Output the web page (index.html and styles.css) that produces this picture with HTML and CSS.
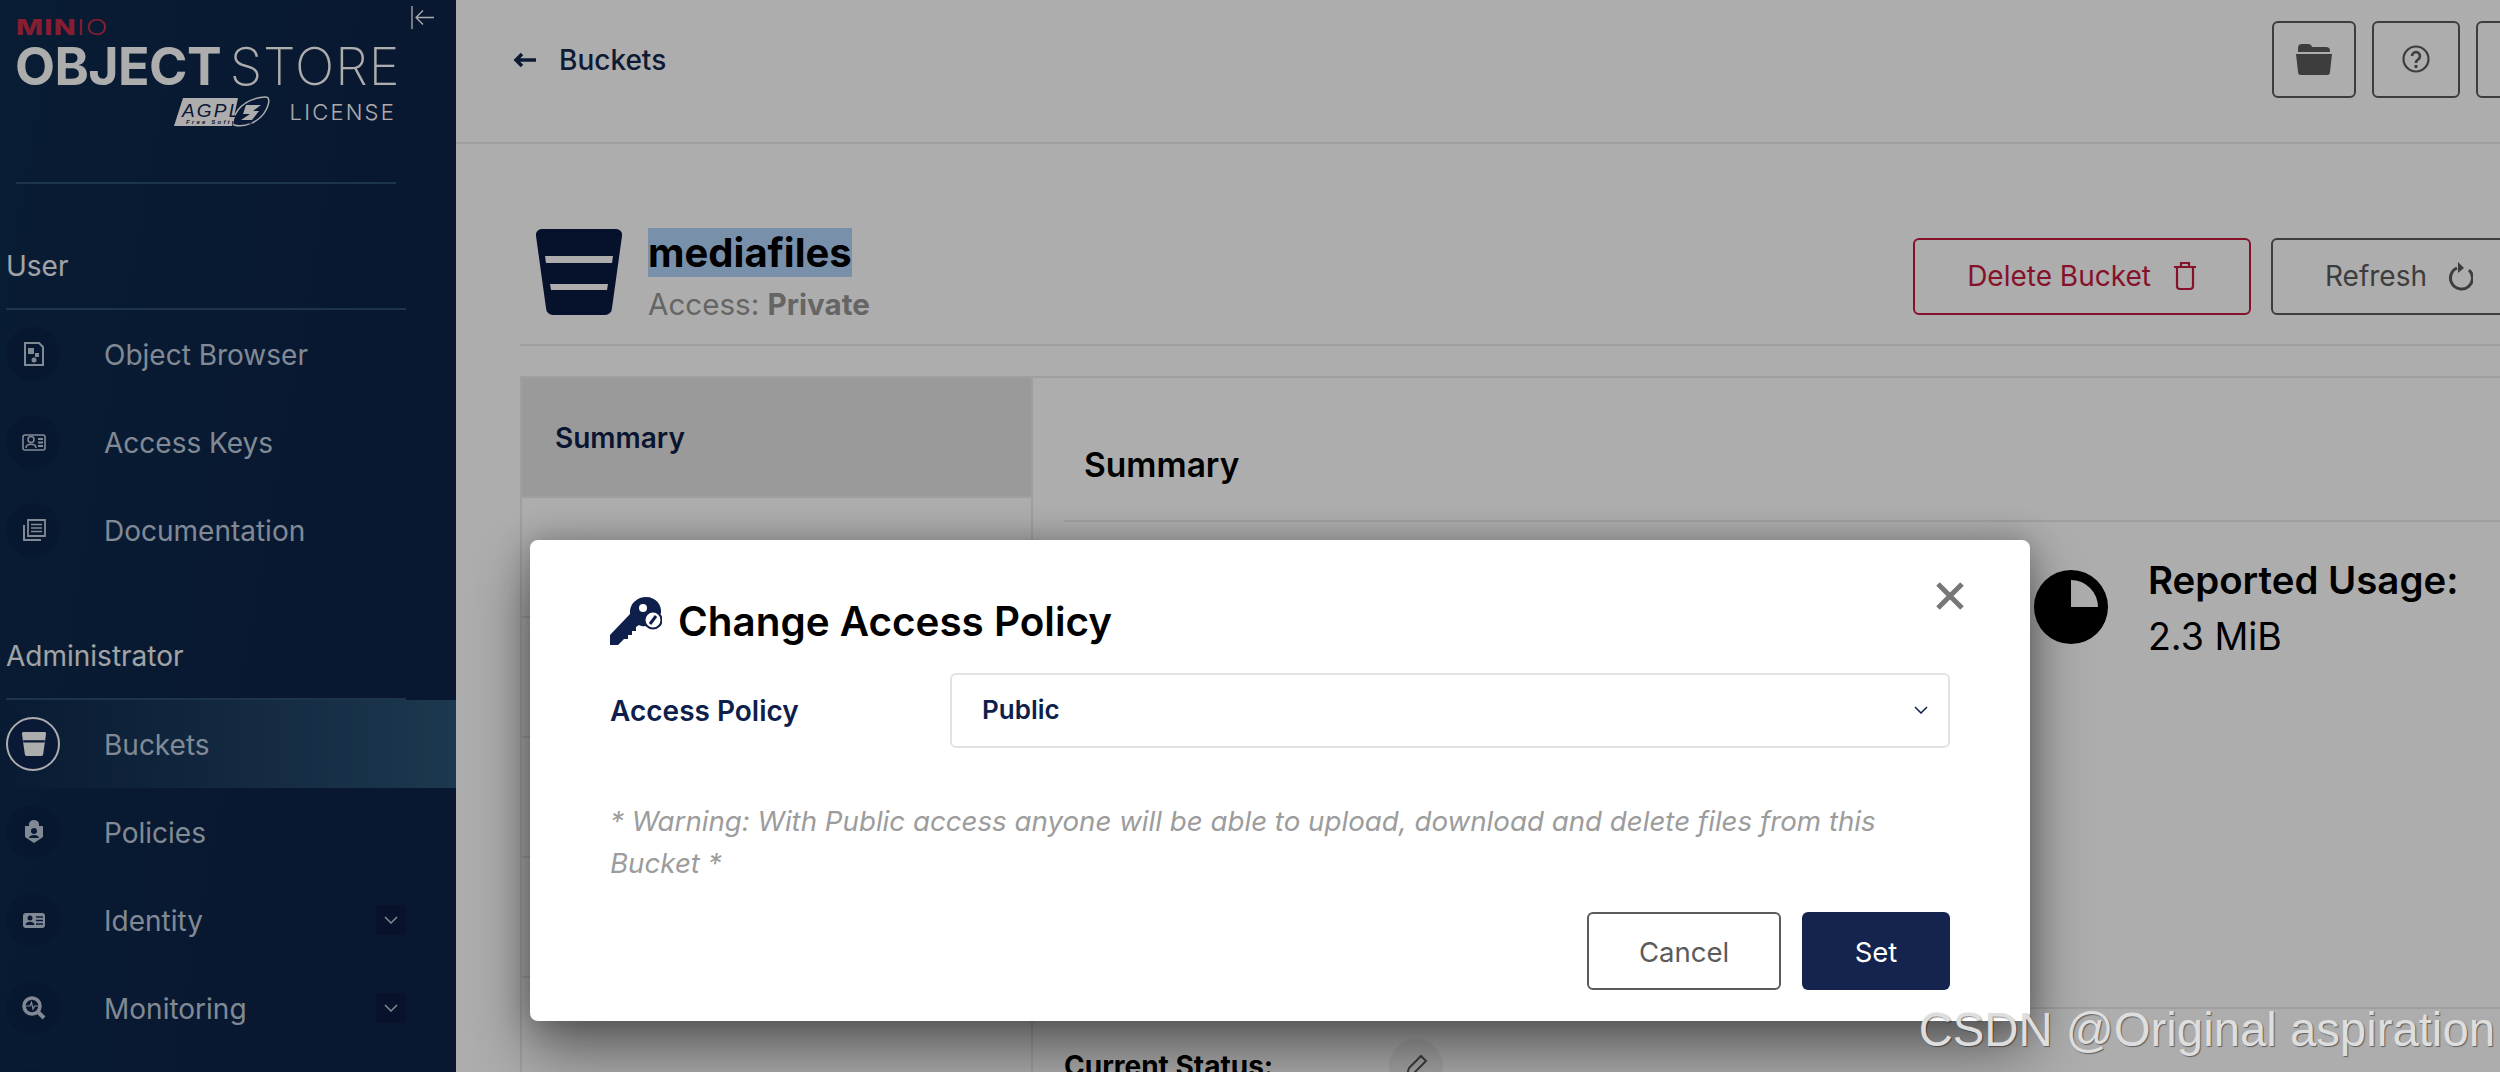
FILE: index.html
```html
<!DOCTYPE html>
<html lang="en">

<head>
  <title>MinIO Object Store</title>
  <meta charset="utf-8">
  <meta name="viewport" content="width=device-width, initial-scale=1">
  <link rel="stylesheet" href="styles.css">
</head>

<body>
  <div class="app">
    <!-- Sidebar -->
    <div class="sidebar">
      <div class="logo">
        <svg class="collapse" viewBox="0 0 24 24" width="24" height="24">
          <path d="M1 0V23M23 11.500H6M12 4.500L5 11.500L12 18.500" fill="none" stroke="#fff" stroke-width="1.300" />
        </svg>
        <div class="brand"><b>MIN</b>IO</div>
        <div class="product"><b>OBJECT</b> <span>STORE</span></div>
        <div class="license">
          <svg class="agpl" viewBox="0 0 96 32" width="96" height="32">
            <polygon points="9,2 64,2 58,30 0,30" fill="#fff" />
            <path d="M60 29C70 32 86 26 92 14C96 6 96 0 90 1C80 2 70 6 64 14C60 20 58 26 60 29Z" fill="#0f2650" stroke="#fff" stroke-width="1.500" />
            <path d="M72 9H87L79 15H85L78 24H67L76 18H69Z" fill="#fff" />
            <text x="8" y="21" class="agpl-text">AGPL</text>
            <text x="12" y="28" class="agpl-small">Free Software</text>
          </svg>
          <span>LICENSE</span>
        </div>
      </div>

      <div class="nav-title">User</div>
      <div class="nav-item">
        <span class="nav-icon"><svg viewBox="0 0 24 24" width="24" height="24"><path d="M3 1H17L21 5V23H3Z" fill="none" stroke="currentColor" stroke-width="2" /><rect x="6" y="6" width="6" height="6" fill="currentColor" /><rect x="13" y="11" width="4" height="4" fill="currentColor" /><circle cx="12" cy="18" r="2.500" fill="currentColor" /></svg></span>
        <span>Object Browser</span>
      </div>
      <div class="nav-item">
        <span class="nav-icon"><svg viewBox="0 0 24 24" width="24" height="24"><rect x="1" y="5" width="22" height="15" rx="2" fill="none" stroke="currentColor" stroke-width="1.600" /><circle cx="9" cy="9.500" r="3" fill="none" stroke="currentColor" stroke-width="1.500" /><path d="M4 18C4 13 14 13 14 18" fill="none" stroke="currentColor" stroke-width="1.500" /><path d="M16 9H21M16 12.500H21M16 16H21" stroke="currentColor" stroke-width="1.800" /></svg></span>
        <span>Access Keys</span>
      </div>
      <div class="nav-item">
        <span class="nav-icon"><svg viewBox="0 0 24 24" width="24" height="24"><path d="M6 2H23V18H6Z" fill="none" stroke="currentColor" stroke-width="1.800" /><path d="M9 6.500H20M9 10H20M9 13.500H20" stroke="currentColor" stroke-width="1.600" /><path d="M2 7V22H19" fill="none" stroke="currentColor" stroke-width="2" /></svg></span>
        <span>Documentation</span>
      </div>

      <div class="nav-title">Administrator</div>
      <div class="nav-item active">
        <span class="nav-icon"><svg viewBox="0 0 86 86" width="24" height="24"><path d="M6 0H80a6 6 0 0 1 6 7L76 79a7 7 0 0 1-7 7H17a7 7 0 0 1-7-7L0 7A6 6 0 0 1 6 0Z" fill="currentColor" /><polygon points="4,30 82,30 81,38 5,38" fill="#0f2650" /></svg></span>
        <span>Buckets</span>
      </div>
      <div class="nav-item">
        <span class="nav-icon"><svg viewBox="0 0 24 24" width="24" height="24"><path d="M3 6H7V4a5 4 0 0 1 10 0V6H21V17L12 23L3 17Z" fill="currentColor" /><circle cx="12" cy="11" r="3" fill="#0f2650" /><path d="M7 18C7 14 17 14 17 18Z" fill="#0f2650" /></svg></span>
        <span>Policies</span>
      </div>
      <div class="nav-item has-sub">
        <span class="nav-icon"><svg viewBox="0 0 24 24" width="24" height="24"><rect x="1" y="5" width="22" height="15" rx="3" fill="currentColor" /><circle cx="8" cy="10" r="2.500" fill="#0f2650" /><path d="M3.500 17C3.500 12.500 12.500 12.500 12.500 17Z" fill="#0f2650" /><path d="M14 9H21M14 12.500H21M14 16H21" stroke="#0f2650" stroke-width="1.300" /></svg></span>
        <span>Identity</span>
        <span class="sub-toggle"><svg viewBox="0 0 14 8" width="14" height="8"><path d="M1 1L7 7L13 1" fill="none" stroke="currentColor" stroke-width="1.500" /></svg></span>
      </div>
      <div class="nav-item has-sub">
        <span class="nav-icon"><svg viewBox="0 0 24 24" width="24" height="24"><circle cx="10" cy="10" r="8" fill="none" stroke="currentColor" stroke-width="3.500" /><path d="M4 10H8L9.500 6.500L11 13L12.500 10H16" fill="none" stroke="currentColor" stroke-width="1.200" /><path d="M15 15L22 22" stroke="currentColor" stroke-width="4" /></svg></span>
        <span>Monitoring</span>
        <span class="sub-toggle"><svg viewBox="0 0 14 8" width="14" height="8"><path d="M1 1L7 7L13 1" fill="none" stroke="currentColor" stroke-width="1.500" /></svg></span>
      </div>
      <div class="nav-item">
        <span class="nav-icon"></span>
      </div>
    </div>

    <!-- Main page behind the dialog -->
    <div class="main">
      <div class="topbar">
        <div class="back">
          <svg viewBox="0 0 24 16" width="24" height="16"><path d="M23 8H3M9 2L3 8L9 14" fill="none" stroke="currentColor" stroke-width="3.500" /></svg>
          <span>Buckets</span>
        </div>
        <div class="top-buttons">
          <button class="top-button folder">
            <svg viewBox="0 0 38 32" width="38" height="32"><path d="M3 5a4 4 0 0 1 4-4H13a4 4 0 0 1 4 3H31a4 4 0 0 1 4 4V9H3Z" fill="currentColor" /><path d="M1 11H37L35 29a3 3 0 0 1-3 3H6a3 3 0 0 1-3-3Z" fill="currentColor" /></svg>
          </button>
          <button class="top-button">
            <svg viewBox="0 0 28 28" width="28" height="28"><circle cx="14" cy="14" r="12.500" fill="none" stroke="currentColor" stroke-width="2.200" /><path d="M10 11a4 4 0 1 1 6 3.500C14.500 15.500 14 16 14 18" fill="none" stroke="currentColor" stroke-width="2.600" /><circle cx="14" cy="21.500" r="1.700" fill="currentColor" /></svg>
          </button>
          <button class="top-button"></button>
        </div>
      </div>

      <div class="content">
        <div class="bucket-header">
          <svg class="bucket-icon" viewBox="0 0 86 86" width="86" height="86"><path d="M6 0H80a6 6 0 0 1 6 7L76 79a7 7 0 0 1-7 7H17a7 7 0 0 1-7-7L0 7A6 6 0 0 1 6 0Z" fill="#0a1a40" /><polygon points="9,27 77,27 76,34 10,34" fill="#fff" /><polygon points="14,55 72,55 71,61 15,61" fill="#fff" /></svg>
          <div class="bucket-name">
            <h1><span class="selected">mediafiles</span></h1>
            <div class="access">Access: <b>Private</b></div>
          </div>
          <div class="bucket-actions">
            <button class="outline-button danger">
              Delete Bucket
              <svg viewBox="0 0 24 30" width="24" height="30"><path d="M1 6H23M8 5V2H16V5M4 6V25a3 3 0 0 0 3 3H17a3 3 0 0 0 3-3V6" fill="none" stroke="currentColor" stroke-width="2.200" /></svg>
            </button>
            <button class="outline-button">
              Refresh
              <svg viewBox="0 0 24 30" width="24" height="30"><path d="M8 7A11 11 0 1 0 20 9" fill="none" stroke="currentColor" stroke-width="3" /><path d="M9 1L15 7L9 12Z" fill="currentColor" /></svg>
            </button>
          </div>
        </div>

        <div class="panel">
          <div class="tabs">
            <div class="tab current">Summary</div>
            <div class="tab"></div>
            <div class="tab"></div>
            <div class="tab"></div>
            <div class="tab"></div>
          </div>
          <div class="summary">
            <h2>Summary</h2>
            <div class="summary-body">
              <div class="usage">
                <svg viewBox="0 0 74 74" width="74" height="74"><circle cx="37" cy="37" r="37" fill="#000" /><path d="M37 10A27 27 0 0 1 64 37H37Z" fill="#fff" /></svg>
                <div>
                  <div class="usage-label">Reported Usage:</div>
                  <div class="usage-value">2.3 MiB</div>
                </div>
              </div>
            </div>
            <div class="status-row">
              <b>Current Status:</b>
              <span class="edit-circle"><svg viewBox="0 0 24 24" width="24" height="24"><path d="M3 21L5 14L17 2L22 7L10 19Z" fill="none" stroke="currentColor" stroke-width="2" /></svg></span>
            </div>
          </div>
        </div>
      </div>
    </div>
  </div>

  <div class="overlay"></div>

  <!-- Dialog -->
  <div class="modal">
    <svg class="close" viewBox="0 0 30 30" width="30" height="30"><path d="M3 3L27 27M27 3L3 27" fill="none" stroke="#777" stroke-width="5" /></svg>
    <div class="modal-title">
      <svg viewBox="0 0 52 48" width="52" height="48"><path d="M0 48V38L20 17C19 6 28 0 36 0C46 0 52 8 51 16L44 26C38 30 32 30 29 28L26 30V34H22V38H18V42H14L8 48Z" fill="#0f1f4b" /><circle cx="33" cy="11" r="4" fill="#fff" /><circle cx="43" cy="23" r="8.500" fill="#fff" stroke="#0f1f4b" stroke-width="2" /><path d="M40 27L46 19" stroke="#0f1f4b" stroke-width="3" /></svg>
      <span>Change Access Policy</span>
    </div>
    <div class="field">
      <label>Access Policy</label>
      <div class="select">
        <span>Public</span>
        <svg viewBox="0 0 14 8" width="14" height="8"><path d="M1 1L7 7L13 1" fill="none" stroke="#0f1f4b" stroke-width="1.500" /></svg>
      </div>
    </div>
    <p class="warning">* Warning: With Public access anyone will be able to upload, download and delete files from this Bucket *</p>
    <div class="modal-buttons">
      <button class="cancel">Cancel</button>
      <button class="set">Set</button>
    </div>
  </div>

  <div class="watermark">CSDN @Original aspiration</div>
</body>

</html>
```

FILE: styles.css
```css
* {
  box-sizing: border-box;
}

body {
  margin: 0;
  width: 2500px;
  height: 1072px;
  overflow: hidden;
  position: relative;
  font-family: Inter, "Liberation Sans", sans-serif;
  background-color: #fff;
  color: #000;
}

button {
  font-family: Inter, "Liberation Sans", sans-serif;
  cursor: pointer;
}

.app {
  display: flex;
  height: 1072px;
}

/* Sidebar */
.sidebar {
  flex: 0 0 456px;
  height: 1072px;
  overflow: hidden;
  background: linear-gradient(100deg, #0d2b4d 0%, #0e2449 60%, #0f2249 100%);
  color: #fff;
}

.logo {
  position: relative;
  height: 184px;
  margin: 0 60px 0 16px;
  border-bottom: 2px solid #2c4f70;
  color: #fff;
}

.collapse {
  position: absolute;
  left: 395px;
  top: 6px;
}

.brand {
  padding-top: 14px;
  height: 42px;
  font-size: 22px;
  line-height: 26px;
  letter-spacing: 1px;
  color: #c72c48;
  font-weight: 300;
  transform: scaleX(1.3);
  transform-origin: left;
}

.brand b {
  font-weight: 800;
}

.product {
  height: 54px;
  margin-top: -2px;
  margin-left: -1px;
  font-size: 52px;
  line-height: 54px;
  font-weight: 200;
  white-space: nowrap;
  word-spacing: -6px;
}

.product b {
  font-weight: 700;
  letter-spacing: -0.6px;
}

.product span {
  letter-spacing: 1px;
}

.license {
  display: flex;
  justify-content: flex-end;
  align-items: center;
  gap: 20px;
  font-size: 22px;
  letter-spacing: 2.2px;
  font-weight: 300;
  margin-top: 2px;
}

.agpl-text {
  font-family: "Liberation Sans", sans-serif;
  font-size: 19px;
  font-style: italic;
  fill: #0f2650;
}

.agpl-small {
  font-family: "Liberation Sans", sans-serif;
  font-size: 6px;
  font-weight: bold;
  font-style: italic;
  fill: #0f2650;
}

.nav-title {
  margin: 0 0 0 6px;
  width: 400px;
  height: 126px;
  padding: 62px 0 22px 0;
  font-size: 28px;
  line-height: 40px;
  border-bottom: 2px solid #2c4f70;
  color: #eef2f6;
}

.nav-item {
  display: flex;
  align-items: center;
  height: 88px;
  padding-left: 6px;
  font-size: 28px;
  color: #bfcbdb;
}

.nav-icon + span {
  margin-top: 2px;
}

.nav-item.active {
  background: linear-gradient(90deg, rgba(40, 80, 112, 0) 0%, #2a5474 100%);
}

.nav-icon {
  display: flex;
  align-items: center;
  justify-content: center;
  flex: 0 0 54px;
  height: 54px;
  margin-right: 44px;
  padding-left: 2px;
  border-radius: 50%;
  background-color: #0d2247;
}

.nav-item.active .nav-icon {
  border: 2px solid #fff;
  background-color: #0f2650;
  color: #fff;
}

.sub-toggle {
  display: flex;
  align-items: center;
  justify-content: center;
  width: 30px;
  height: 30px;
  margin-top: 0;
  margin-left: auto;
  margin-right: 50px;
  background-color: #0c1d40;
}

/* Main page */
.main {
  flex: 1;
  height: 1072px;
  overflow: hidden;
  background-color: #ffffff;
}

.topbar {
  display: flex;
  justify-content: space-between;
  align-items: center;
  width: 2108px;
  height: 144px;
  padding-left: 57px;
  padding-bottom: 24px;
  border-bottom: 2px solid #eaeaea;
}

.back {
  display: flex;
  align-items: center;
  gap: 22px;
  margin-top: 2px;
  font-size: 28px;
  font-weight: 500;
  color: #14294f;
}

.top-buttons {
  display: flex;
  gap: 16px;
}

.top-button {
  display: flex;
  align-items: center;
  justify-content: center;
  width: 88px;
  height: 77px;
  padding: 0;
  background: transparent;
  border: 2px solid #5b5b5b;
  border-radius: 6px;
  color: #5b5b5b;
}

.top-button.folder {
  width: 84px;
}

.content {
  width: 2020px;
  margin-left: 64px;
}

.bucket-header {
  display: flex;
  align-items: center;
  height: 202px;
  padding-top: 52px;
  padding-left: 16px;
  padding-right: 13px;
  border-bottom: 2px solid #eaeaea;
}

.bucket-icon {
  flex: none;
  margin-right: 26px;
  margin-top: 3px;
}

.bucket-name {
  margin-top: 13px;
}

.bucket-name h1 {
  margin: 0;
  font-size: 40px;
  line-height: 48px;
  font-weight: 700;
}

.selected {
  background-color: #b3d4fc;
}

.access {
  margin-top: 7px;
  font-size: 29.600px;
  line-height: 40px;
  color: #969696;
}

.access b {
  font-weight: 700;
}

.bucket-actions {
  display: flex;
  gap: 20px;
  margin-left: auto;
  margin-top: 12px;
}

.outline-button {
  display: flex;
  align-items: center;
  gap: 22px;
  height: 77px;
  padding: 0 52px;
  background: transparent;
  border: 2px solid #5b5b5b;
  border-radius: 6px;
  font-size: 28px;
  color: #5b5b5b;
}

.outline-button.danger {
  border-color: #c51b3f;
  color: #c51b3f;
}

.panel {
  display: flex;
  margin-top: 30px;
  border-top: 2px solid #eaeaea;
}

.tabs {
  flex: 0 0 513px;
  border-left: 2px solid #eaeaea;
  border-right: 2px solid #eaeaea;
}

.tab {
  height: 120px;
  border-bottom: 2px solid #eaeaea;
  padding-left: 33px;
  font-size: 28px;
  line-height: 120px;
  font-weight: 600;
  color: #0f1f4b;
}

.tab.current {
  background-color: #e4e4e4;
}

.summary {
  flex: 1;
  padding-left: 31px;
}

.summary h2 {
  margin: 0;
  height: 144px;
  padding-left: 20px;
  border-bottom: 2px solid #eaeaea;
  font-size: 33.500px;
  line-height: 174px;
  font-weight: 600;
}

.summary-body {
  height: 487px;
  padding-top: 48px;
  padding-left: 970px;
  border-bottom: 2px solid #eaeaea;
}

.usage {
  display: flex;
  gap: 40px;
}

.usage-label {
  margin-top: -12px;
  font-size: 38.400px;
  line-height: 44px;
  font-weight: 600;
  white-space: nowrap;
}

.usage-value {
  margin-top: 13px;
  font-size: 37.500px;
  line-height: 44px;
}

.status-row {
  display: flex;
  align-items: center;
  padding-top: 30px;
  font-size: 28px;
}

.status-row b {
  flex: 0 0 325px;
}

.edit-circle {
  display: flex;
  align-items: center;
  justify-content: center;
  width: 54px;
  height: 54px;
  border-radius: 50%;
  background-color: #f2f2f2;
  color: #5b5b5b;
}

/* Dialog and its backdrop */
.overlay {
  position: absolute;
  left: 0;
  top: 0;
  width: 100%;
  height: 100%;
  background-color: rgba(0, 0, 0, 0.32);
}

.modal {
  position: absolute;
  left: 530px;
  top: 540px;
  width: 1500px;
  height: 481px;
  padding: 57px 80px 0 80px;
  background-color: #fff;
  border-radius: 8px;
  box-shadow: 0 30px 60px rgba(0, 0, 0, 0.45), 0 0 30px rgba(0, 0, 0, 0.25);
}

.close {
  position: absolute;
  right: 65px;
  top: 41px;
}

.modal-title {
  display: flex;
  align-items: center;
  gap: 16px;
  height: 48px;
  font-size: 40.400px;
  font-weight: 600;
}

.field {
  display: flex;
  align-items: center;
  margin-top: 28px;
}

.field label {
  flex: 0 0 340px;
  font-size: 28px;
  font-weight: 600;
  color: #0f1f4b;
}

.select {
  display: flex;
  flex: 1;
  align-items: center;
  justify-content: space-between;
  height: 75px;
  padding: 0 20px 2px 30px;
  border: 2px solid #e2e2e2;
  border-radius: 6px;
  font-size: 26px;
  font-weight: 600;
  color: #0f1f4b;
}

.warning {
  margin: 52px 0 0 0;
  font-size: 27.700px;
  line-height: 42px;
  font-style: italic;
  color: #9c9c9c;
}

.modal-buttons {
  display: flex;
  justify-content: flex-end;
  gap: 21px;
  margin-top: 28px;
}

.modal-buttons button {
  height: 78px;
  padding-top: 2px;
  border-radius: 6px;
  font-size: 27.500px;
}

.cancel {
  width: 194px;
  background: #fff;
  border: 2px solid #5b5b5b;
  color: #5b5b5b;
}

.set {
  width: 148px;
  background-color: #14244f;
  border: none;
  color: #fff;
}

.watermark {
  position: absolute;
  right: 5px;
  top: 1002px;
  font-family: "Liberation Sans", sans-serif;
  font-size: 47.300px;
  line-height: 56px;
  color: #dedede;
  text-shadow: 1px 1px 1px rgba(0, 0, 0, 0.45);
  white-space: nowrap;
}
```
